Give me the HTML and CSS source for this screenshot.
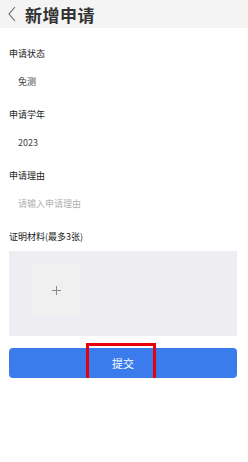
FILE: index.html
```html
<!DOCTYPE html>
<html lang="zh-CN">
<head>
    <meta charset="UTF-8">
    <meta name="viewport" content="width=device-width, initial-scale=1.0">
    <title>新增申请</title>
    <link rel="stylesheet" href="styles.css">
</head>
<body>

    <div class="header">
        <svg class="back" width="10" height="16" viewBox="0 0 10 16">
            <polyline points="8,1 2,8 8,15" fill="none" stroke="#666" stroke-width="1.1"/>
        </svg>
        <h1>新增申请</h1>
    </div>

    <div class="form">
        <div class="field">
            <div class="label">申请状态</div>
            <div class="value">免测</div>
        </div>
        <div class="field">
            <div class="label">申请学年</div>
            <div class="value">2023</div>
        </div>
        <div class="field">
            <div class="label">申请理由</div>
            <div class="value placeholder">请输入申请理由</div>
        </div>
        <div class="field">
            <div class="label">证明材料(最多3张)</div>
        </div>
        <div class="upload-box">
            <div class="upload-btn">
                <svg width="9" height="9" viewBox="0 0 9 9">
                    <path d="M4.5 0v9M0 4.5h9" stroke="#8a8a8a" stroke-width="1"/>
                </svg>
            </div>
        </div>
        <div class="submit-wrap">
            <button type="button" class="submit">提交</button>
            <div class="highlight"></div>
        </div>
    </div>

</body>
</html>
```

FILE: styles.css
```css
body {
    margin: 0;
    background-color: #fff;
    font-family: "Noto Sans CJK SC", "Noto Sans", sans-serif;
    color: #333;
}
.header {
    height: 28px;
    background-color: #f4f4f4;
    display: flex;
    align-items: center;
    padding-left: 7px;
}
.back {
    display: block;
    margin-right: 8px;
}
.header h1 {
    margin: 0;
    font-size: 17px;
    font-weight: bold;
    color: #333;
    letter-spacing: 0.5px;
}
.form {
    padding: 0 11px 0 9px;
}
.field {
    padding-top: 19px;
}
.label {
    font-size: 9px;
    line-height: 14px;
    color: #1a1a1a;
}
.value {
    margin-top: 14px;
    padding-left: 9px;
    font-size: 9px;
    line-height: 14px;
    color: #444;
}
.placeholder {
    color: #b0b0b0;
}
.upload-box {
    margin-top: 7px;
    height: 85px;
    background-color: #eeeef2;
    padding: 13px 0 0 23px;
    box-sizing: border-box;
}
.upload-btn {
    width: 48px;
    height: 52px;
    background-color: #f0f0f0;
    display: flex;
    align-items: center;
    justify-content: center;
}
.submit-wrap {
    position: relative;
    margin-top: 12px;
}
.submit {
    display: block;
    width: 100%;
    height: 30px;
    border: none;
    border-radius: 4px;
    background-color: #3b7cec;
    color: #fff;
    font-family: inherit;
    font-size: 11px;
    padding: 0;
}
/* cadre rouge par-dessus le bouton */
.highlight {
    position: absolute;
    left: 77px;
    top: -5px;
    width: 64px;
    height: 33px;
    border: 3px solid #e8000b;
}
```
